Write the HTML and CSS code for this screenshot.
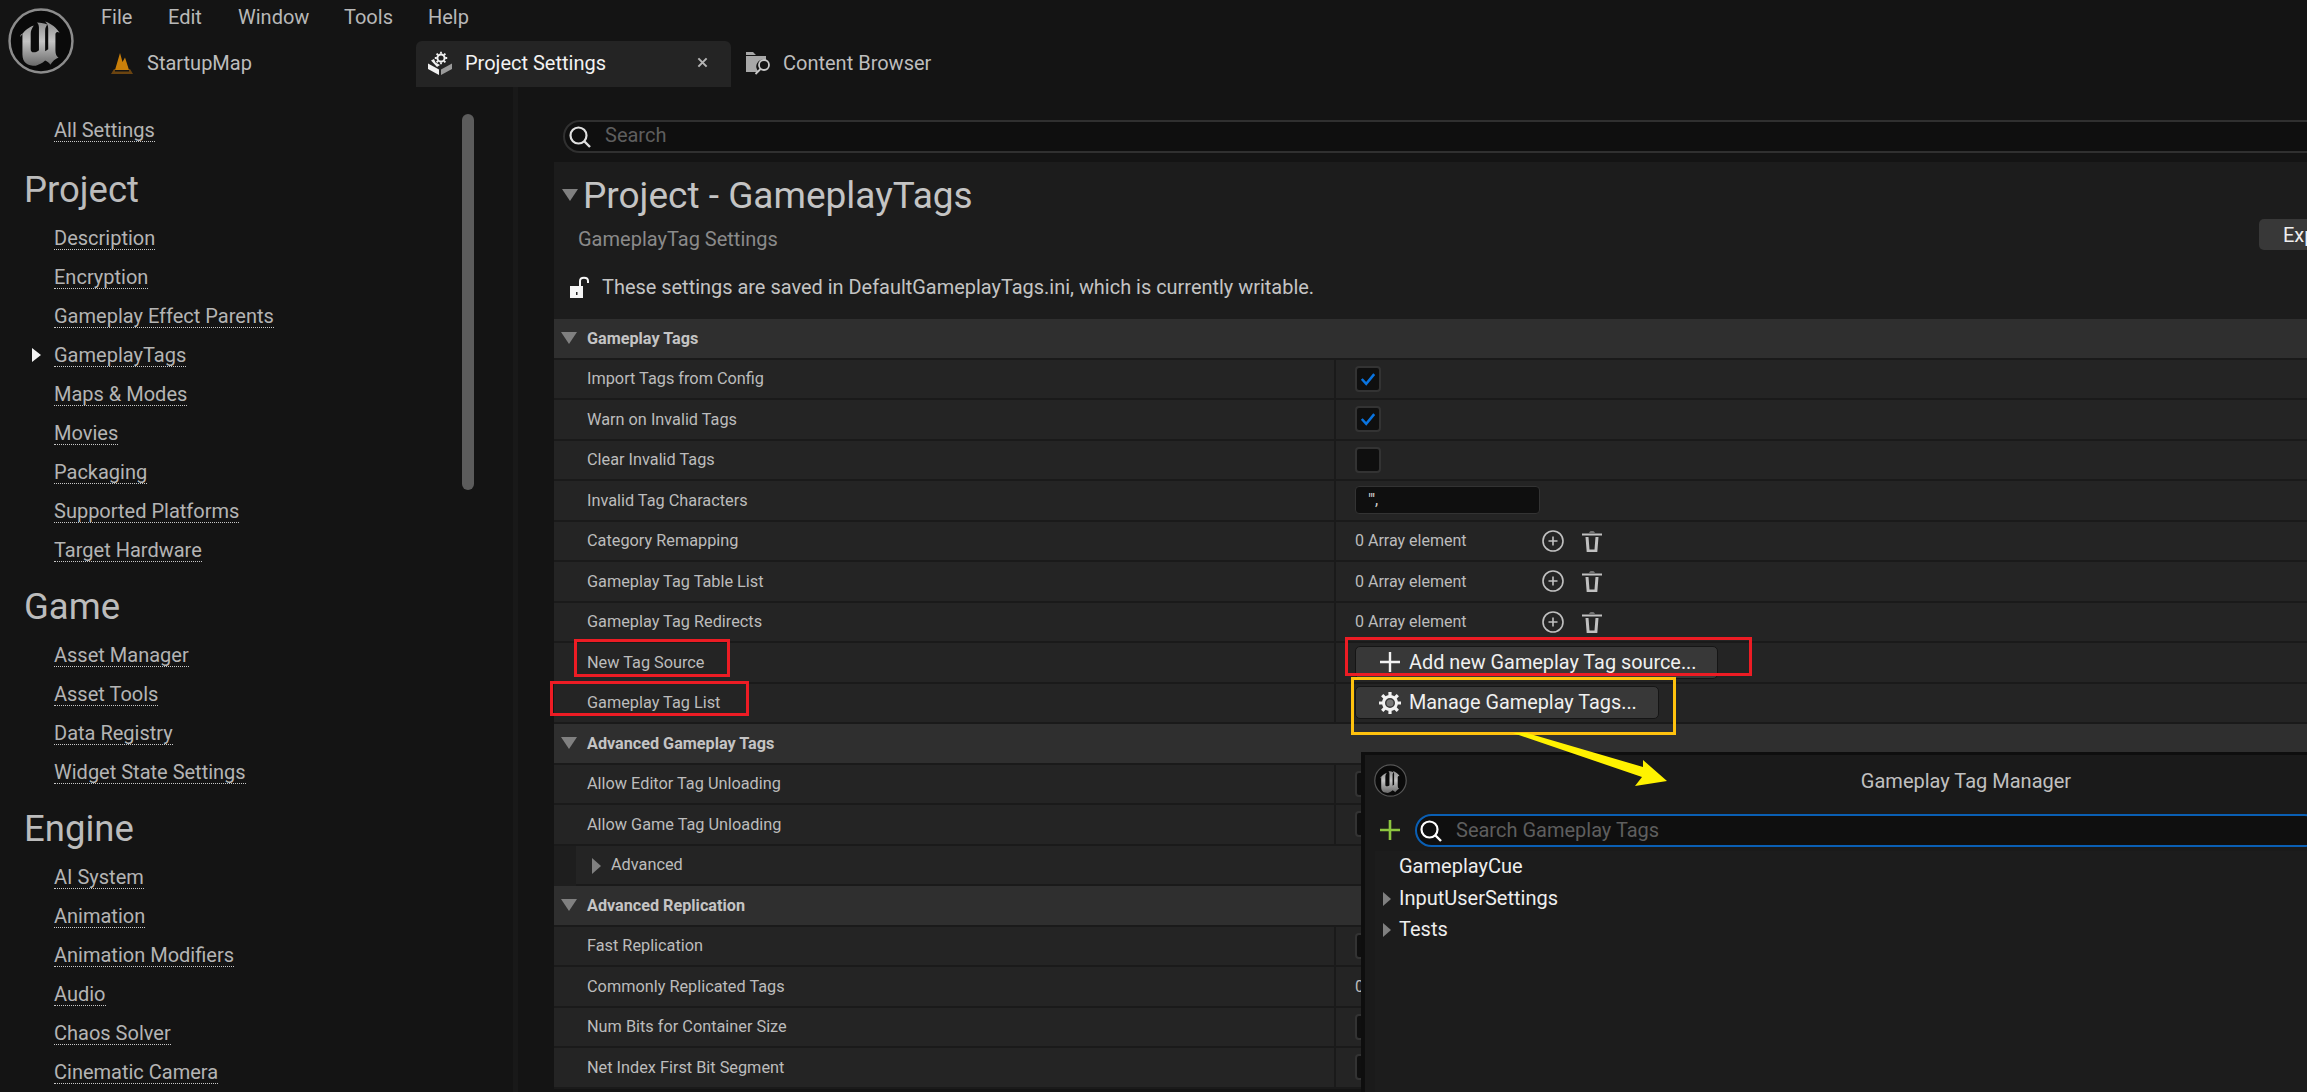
FILE: index.html
```html
<!DOCTYPE html>
<html lang="en">
<head>
  <meta charset="UTF-8" />
  <title>Project Settings</title>
  <link rel="stylesheet" href="styles.css">
</head>
<body>
  <svg class="defs" width="0" height="0">
    <defs>
      <linearGradient id="ueMetal" x1="0" y1="0" x2="0" y2="1">
        <stop offset="0" stop-color="#8c8c8c"/>
        <stop offset=".45" stop-color="#c4c4c4"/>
        <stop offset="1" stop-color="#6a6a6a"/>
      </linearGradient>
      <symbol id="ueLogo" viewBox="0 0 64 64">
        <circle cx="32" cy="32" r="30.5" fill="#0a0a0a" stroke="currentColor" stroke-width="2.4"/>
        <path d="M12 28c3-5 7-9 13-11-2 3-3 5-3 8v15c0 2 1 3 3 3 2 0 4-1 5-2V19c0-3-1-4-2-5 4 0 8 1 10 2-1 2-2 3-2 6v20l3-2V20c0-3-1-5-3-7 6 2 11 6 14 11-2-1-3-1-4 1v16c0 4 1 6 3 7-3 1-6 4-8 7-1-2-3-3-5-4-3 3-6 4-9 5-8 0-13-3-13-11V25c-1 0-2 1-2 3z" fill="url(#ueMetal)"/>
      </symbol>
      <symbol id="searchIcon" viewBox="0 0 24 24">
        <circle cx="10.500" cy="10.500" r="8" fill="none" stroke="currentColor" stroke-width="2.200"/>
        <path d="M16 16l6 6" stroke="currentColor" stroke-width="2.400" fill="none"/>
      </symbol>
      <symbol id="addCircle" viewBox="0 0 24 24">
        <circle cx="12" cy="12" r="10" fill="none" stroke="currentColor" stroke-width="1.600"/>
        <path d="M12 7.500v9M7.500 12h9" stroke="currentColor" stroke-width="1.600" fill="none"/>
      </symbol>
      <symbol id="trash" viewBox="0 0 24 24">
        <path d="M9 3.500c0-1.500 6-1.500 6 0z" fill="currentColor"/>
        <path d="M2 4.500h20v2H2z" fill="currentColor"/>
        <path d="M5.500 8h3l1 12.500h5l1-12.500h3l-1.200 15H6.700z" fill="currentColor"/>
      </symbol>
    </defs>
  </svg>

  <header class="topbar">
    <svg class="logo"><use href="#ueLogo"/></svg>
    <div class="topbar-right">
      <nav class="menu">
        <span class="menu-item">File</span>
        <span class="menu-item">Edit</span>
        <span class="menu-item">Window</span>
        <span class="menu-item">Tools</span>
        <span class="menu-item">Help</span>
      </nav>
      <div class="tabs">
        <div class="tab tab-map">
          <svg class="tab-icon" viewBox="0 0 24 24">
            <path d="M5 19L10 2l2.500 9L15 6.500 19 19z" fill="#c97f0a"/>
            <path d="M1 23l3-5h1v2.500h14V18h1l3 5z" fill="#6b4410"/>
          </svg>
          <span>StartupMap</span>
        </div>
        <div class="tab tab-active">
          <svg class="tab-icon" viewBox="0 0 24 24">
            <path d="M0 12.500l11 6v5.500L0 18z" fill="#f0f0f0"/>
            <path d="M24 12.500l-11 6v5.500l11-6z" fill="#9a9a9a"/>
            <path d="M3 9.500l3-1.500 1.500 3.500 4.500 2.500-3 2z" fill="#f0f0f0"/>
            <circle cx="13" cy="7" r="3.600" fill="none" stroke="#f0f0f0" stroke-width="2"/>
            <path d="M13 .8v2M13 11.200v2M6.800 7h2M17.200 7h2M8.600 2.600l1.400 1.400M16 10l1.400 1.400M8.600 11.400L10 10M16 4l1.400-1.400" stroke="#f0f0f0" stroke-width="1.800"/>
          </svg>
          <span class="tab-label">Project Settings</span>
          <svg class="tab-close" viewBox="0 0 12 12"><path d="M1.500 1.500l9 9M10.500 1.500l-9 9" stroke="#b5b5b5" stroke-width="2.200"/></svg>
        </div>
        <div class="tab tab-browser">
          <svg class="tab-icon" viewBox="0 0 24 24">
            <path d="M0 1h7l3 3h-10zM0 5h20v4a7 7 0 0 0-7 12H0z" fill="#a8a8a8"/>
            <circle cx="18" cy="14" r="5" fill="none" stroke="#c8c8c8" stroke-width="1.800"/>
            <path d="M14.500 18l-5 5" stroke="#c8c8c8" stroke-width="1.800"/>
          </svg>
          <span>Content Browser</span>
        </div>
      </div>
    </div>
  </header>

  <div class="main">
    <aside class="sidebar">
      <div class="scrollbar"></div>
      <a class="side-link side-all">All Settings</a>
      <h2 class="side-head">Project</h2>
      <a class="side-link">Description</a>
      <a class="side-link">Encryption</a>
      <a class="side-link">Gameplay Effect Parents</a>
      <a class="side-link side-current">GameplayTags</a>
      <a class="side-link">Maps &amp; Modes</a>
      <a class="side-link">Movies</a>
      <a class="side-link">Packaging</a>
      <a class="side-link">Supported Platforms</a>
      <a class="side-link">Target Hardware</a>
      <h2 class="side-head">Game</h2>
      <a class="side-link">Asset Manager</a>
      <a class="side-link">Asset Tools</a>
      <a class="side-link">Data Registry</a>
      <a class="side-link">Widget State Settings</a>
      <h2 class="side-head">Engine</h2>
      <a class="side-link">AI System</a>
      <a class="side-link">Animation</a>
      <a class="side-link">Animation Modifiers</a>
      <a class="side-link">Audio</a>
      <a class="side-link">Chaos Solver</a>
      <a class="side-link">Cinematic Camera</a>
    </aside>

    <section class="content">
      <div class="searchbox">
        <svg class="search-icon"><use href="#searchIcon"/></svg>
        <span class="search-text">Search</span>
      </div>

      <div class="panel">
        <div class="panel-title">
          <span class="tri tri-down tri-title"></span>
          <h1>Project - GameplayTags</h1>
        </div>
        <div class="panel-sub">
          <span>GameplayTag Settings</span>
          <button class="export-btn">Export</button>
        </div>
        <div class="panel-note">
          <svg class="lock" viewBox="0 0 22 22">
            <path d="M1 10h13v12H1z" fill="#f5f5f5"/>
            <path d="M7 16h1.500v3H7z" fill="#222"/>
            <path d="M11 10V5c0-4.500 8-4.500 8 0v2" fill="none" stroke="#f5f5f5" stroke-width="2"/>
          </svg>
          <span>These settings are saved in DefaultGameplayTags.ini, which is currently writable.</span>
        </div>

        <div class="section-row"><span class="tri tri-down"></span>Gameplay Tags</div>
        <div class="row"><div class="row-name">Import Tags from Config</div><div class="row-val"><span class="checkbox"><svg viewBox="0 0 18 14"><path d="M2 7l5 5.500L16 1.500" fill="none" stroke="#0a74e0" stroke-width="2.800"/></svg></span></div></div>
        <div class="row"><div class="row-name">Warn on Invalid Tags</div><div class="row-val"><span class="checkbox"><svg viewBox="0 0 18 14"><path d="M2 7l5 5.500L16 1.500" fill="none" stroke="#0a74e0" stroke-width="2.800"/></svg></span></div></div>
        <div class="row"><div class="row-name">Clear Invalid Tags</div><div class="row-val"><span class="checkbox"></span></div></div>
        <div class="row"><div class="row-name">Invalid Tag Characters</div><div class="row-val"><span class="textfield">"',</span></div></div>
        <div class="row"><div class="row-name">Category Remapping</div><div class="row-val"><span class="array-count">0 Array element</span><svg class="arr-icon"><use href="#addCircle"/></svg><svg class="arr-icon arr-trash"><use href="#trash"/></svg></div></div>
        <div class="row"><div class="row-name">Gameplay Tag Table List</div><div class="row-val"><span class="array-count">0 Array element</span><svg class="arr-icon"><use href="#addCircle"/></svg><svg class="arr-icon arr-trash"><use href="#trash"/></svg></div></div>
        <div class="row"><div class="row-name">Gameplay Tag Redirects</div><div class="row-val"><span class="array-count">0 Array element</span><svg class="arr-icon"><use href="#addCircle"/></svg><svg class="arr-icon arr-trash"><use href="#trash"/></svg></div></div>
        <div class="row"><div class="row-name">New Tag Source</div><div class="row-val"><button class="ue-btn ue-btn-add"><svg class="btn-icon" viewBox="0 0 20 20"><path d="M10 0v20M0 10h20" stroke="#f2f2f2" stroke-width="2.400"/></svg>Add new Gameplay Tag source...</button></div></div>
        <div class="row"><div class="row-name">Gameplay Tag List</div><div class="row-val"><button class="ue-btn ue-btn-manage"><svg class="btn-icon btn-gear" viewBox="0 0 24 24"><circle cx="12" cy="12" r="6.500" fill="none" stroke="#f2f2f2" stroke-width="3"/><circle cx="12" cy="12" r="3.500" fill="#777"/><path d="M12 1v4M12 19v4M1 12h4M19 12h4M4.200 4.200l2.800 2.800M17 17l2.800 2.800M4.200 19.800L7 17M17 7l2.800-2.800" stroke="#f2f2f2" stroke-width="3.200"/></svg>Manage Gameplay Tags...</button></div></div>

        <div class="section-row"><span class="tri tri-down"></span>Advanced Gameplay Tags</div>
        <div class="row"><div class="row-name">Allow Editor Tag Unloading</div><div class="row-val"><span class="checkbox"></span></div></div>
        <div class="row"><div class="row-name">Allow Game Tag Unloading</div><div class="row-val"><span class="checkbox"></span></div></div>
        <div class="row row-advanced"><span class="tri tri-right"></span>Advanced</div>

        <div class="section-row"><span class="tri tri-down"></span>Advanced Replication</div>
        <div class="row"><div class="row-name">Fast Replication</div><div class="row-val"><span class="checkbox"></span></div></div>
        <div class="row"><div class="row-name">Commonly Replicated Tags</div><div class="row-val"><span class="array-count">0 Array element</span></div></div>
        <div class="row"><div class="row-name">Num Bits for Container Size</div><div class="row-val"><span class="checkbox"></span></div></div>
        <div class="row"><div class="row-name">Net Index First Bit Segment</div><div class="row-val"><span class="checkbox"></span></div></div>
      </div>
    </section>
  </div>

  <!-- tag manager window, pasted over the settings -->
  <div class="tag-window">
    <div class="tag-title">
      <svg class="tag-logo"><use href="#ueLogo"/></svg>
      <span class="tag-title-text">Gameplay Tag Manager</span>
    </div>
    <div class="tag-body">
      <div class="tag-search-row">
        <svg class="tag-add" viewBox="0 0 20 20"><path d="M10 0v20M0 10h20" stroke="#8cc63f" stroke-width="2.600"/></svg>
        <div class="tag-search">
          <svg class="search-icon tag-search-icon"><use href="#searchIcon"/></svg>
          <span class="tag-search-text">Search Gameplay Tags</span>
        </div>
      </div>
      <div class="tag-item">GameplayCue</div>
      <div class="tag-item"><span class="tri tri-right tri-tree"></span>InputUserSettings</div>
      <div class="tag-item"><span class="tri tri-right tri-tree"></span>Tests</div>
    </div>
  </div>

  <!-- annotations drawn on the screenshot -->
  <div class="mark mark-red mark-source"></div>
  <div class="mark mark-red mark-list"></div>
  <div class="mark mark-red mark-add"></div>
  <div class="mark mark-yellow mark-manage"></div>
  <svg class="arrow" viewBox="0 0 170 60">
    <polygon points="3,3 17,3 133,37 133,30 157,51 125,56 132,47" fill="#fff200"/>
  </svg>
</body>
</html>
```

FILE: styles.css
```css
* {
  box-sizing: border-box;
}

html, body {
  margin: 0;
  height: 100%;
}

body {
  position: relative;
  width: 2307px;
  height: 1092px;
  overflow: hidden;
  background: #141414;
  font-family: Roboto, "Liberation Sans", sans-serif;
  color: #c0c0c0;
}

.defs {
  position: absolute;
}

/* top bar */
.topbar {
  display: flex;
  height: 87px;
}

.logo {
  width: 66px;
  height: 66px;
  margin: 8px 0 0 8px;
  color: #8c8c8c;
}

.topbar-right {
  display: flex;
  flex-direction: column;
  margin-left: 27px;
}

.menu {
  display: flex;
  height: 41px;
  padding: 4px 0 0 0;
  font-size: 20px;
  line-height: 26px;
  color: #b8b8b8;
}

.menu-item:nth-child(1) { width: 67px; }
.menu-item:nth-child(2) { width: 70px; }
.menu-item:nth-child(3) { width: 106px; }
.menu-item:nth-child(4) { width: 84px; }

.tabs {
  display: flex;
  height: 46px;
  font-size: 20px;
}

.tab {
  display: flex;
  align-items: center;
  padding-bottom: 3px;
}

.tab-map {
  width: 315px;
  padding-left: 9px;
  color: #bdbdbd;
}

.tab-active {
  width: 315px;
  padding-left: 12px;
  background: #242424;
  border-radius: 6px 6px 0 0;
  color: #f2f2f2;
}

.tab-browser {
  padding-left: 15px;
  color: #bdbdbd;
}

.tab-icon {
  width: 24px;
  height: 24px;
  margin-right: 13px;
  flex: none;
}

.tab-label {
  width: 232px;
}

.tab-close {
  width: 11px;
  height: 11px;
}

/* left list */
.main {
  display: flex;
  height: 1005px;
}

.sidebar {
  position: relative;
  width: 518px;
  flex: none;
  padding: 32px 0 0 54px;
  border-right: 5px solid #191919;
}

.scrollbar {
  position: absolute;
  left: 462px;
  top: 27px;
  width: 12px;
  height: 376px;
  border-radius: 6px;
  background: #5c5c5c;
}

.side-link {
  display: table;
  height: 23px;
  margin-bottom: 16px;
  font-size: 20px;
  line-height: 22px;
  color: #b4b4b4;
  border-bottom: 1px dotted #c8c8c8;
}

.side-all {
  margin-bottom: 27px;
}

.side-current {
  position: relative;
}

.side-current::before {
  content: "";
  position: absolute;
  left: -22px;
  top: 4px;
  border-left: 9px solid #f4f4f4;
  border-top: 7px solid transparent;
  border-bottom: 7px solid transparent;
}

.side-head {
  margin: 24px 0 16px -30px;
  font-size: 36.500px;
  line-height: 42px;
  font-weight: 400;
  color: #bcbcbc;
}

/* settings */
.content {
  flex: 1;
  min-width: 0;
  padding: 33px 0 0 36px;
}

.searchbox {
  display: flex;
  align-items: center;
  height: 33px;
  margin: 0 -40px 9px 9px;
  padding-left: 3px;
  background: #0f0f0f;
  border: 2px solid #303030;
  border-radius: 17px;
}

.search-icon {
  width: 24px;
  height: 24px;
  color: #e0e0e0;
}

.search-text {
  margin-left: 13px;
  margin-bottom: 4px;
  font-size: 20px;
  color: #5e5e5e;
}

.panel {
  margin-right: -40px;
  background: #1c1c1c;
}

.panel-title {
  display: flex;
  align-items: center;
  height: 66px;
  padding-left: 8px;
}

.panel-title h1 {
  margin: 0;
  font-size: 37px;
  font-weight: 400;
  color: #c4c4c4;
}

.panel-sub {
  position: relative;
  height: 27px;
  padding-left: 24px;
  font-size: 20px;
  line-height: 22px;
  color: #8a8a8a;
}

.export-btn {
  position: absolute;
  left: 1705px;
  top: -9px;
  width: 120px;
  height: 31px;
  padding: 0 0 0 24px;
  text-align: left;
  font: inherit;
  color: #eee;
  background: #383838;
  border: 0;
  border-radius: 5px;
}

.panel-note {
  display: flex;
  align-items: center;
  height: 64px;
  padding-left: 15px;
  font-size: 19.950px;
  color: #c4c4c4;
}

.lock {
  width: 22px;
  height: 22px;
  margin-right: 11px;
}

.section-row {
  display: flex;
  align-items: center;
  height: 40.500px;
  padding-left: 33px;
  background: #2f2f2f;
  border-bottom: 2px solid #1a1a1a;
  font-size: 16.200px;
  font-weight: 700;
  color: #c4c4c4;
  position: relative;
}

.tri {
  position: absolute;
  display: block;
}

.tri-down {
  border-top: 12px solid #808080;
  border-left: 8px solid transparent;
  border-right: 8px solid transparent;
  left: 7px;
  top: 13px;
}

.tri-right {
  border-left: 9px solid #808080;
  border-top: 8px solid transparent;
  border-bottom: 8px solid transparent;
}

.tri-title {
  position: static;
  margin: 0 5px 0 0;
}

.row {
  display: flex;
  height: 40.500px;
  background: #242424;
  border-bottom: 2px solid #1a1a1a;
  font-size: 16.300px;
}

.row-name {
  display: flex;
  align-items: center;
  width: 782px;
  padding-left: 33px;
  border-right: 2px solid #1a1a1a;
  color: #bcbcbc;
}

.row-val {
  display: flex;
  align-items: center;
  padding-left: 19px;
  font-size: 16px;
}

.row-advanced {
  position: relative;
  align-items: center;
  margin-left: 22px;
  padding-left: 35px;
  color: #bcbcbc;
  box-shadow: -22px 0 0 #1e1e1e;
}

.row-advanced .tri {
  left: 16px;
  top: 12px;
}

.checkbox {
  display: block;
  width: 26px;
  height: 26px;
  padding: 4px 3px;
  background: #0f0f0f;
  border: 2px solid #333;
  border-radius: 4px;
}

.checkbox svg {
  display: block;
  width: 16px;
  height: 14px;
}

.textfield {
  display: block;
  width: 185px;
  height: 28px;
  padding-left: 12px;
  background: #0f0f0f;
  border: 1px solid #333;
  border-radius: 4px;
  line-height: 26px;
  color: #d0d0d0;
}

.array-count {
  width: 186px;
  color: #bcbcbc;
}

.arr-icon {
  width: 24px;
  height: 24px;
  color: #c0c0c0;
}

.arr-trash {
  margin-left: 15px;
}

.ue-btn {
  display: flex;
  align-items: center;
  height: 33px;
  padding: 0 0 0 24px;
  font-family: inherit;
  font-size: 19.850px;
  color: #f0f0f0;
  background: #383838;
  border: 1px solid #151515;
  border-radius: 5px;
}

.ue-btn-add { width: 363px; }
.ue-btn-manage { width: 304px; }

.btn-icon {
  width: 20px;
  height: 20px;
  margin-right: 9px;
}

.btn-gear {
  width: 24px;
  height: 24px;
  margin: 0 7px 0 -2px;
}

/* tag manager window */
.tag-window {
  position: absolute;
  left: 1361px;
  top: 752px;
  width: 960px;
  height: 340px;
  background: #1a1a1a;
  border: solid #0e0e0e;
  border-width: 3px 0 0 4px;
}

.tag-title {
  position: relative;
  display: flex;
  align-items: center;
  justify-content: center;
  height: 52px;
  padding-left: 246px;
  font-size: 20px;
  color: #c0c0c0;
}

.tag-logo {
  position: absolute;
  left: 9px;
  top: 9px;
  width: 33px;
  height: 33px;
  color: #555;
}

.tag-body {
  margin-left: 10px;
  height: 290px;
  background: #1c1c1c;
}

.tag-search-row {
  display: flex;
  align-items: flex-start;
  height: 44px;
  margin-left: -10px;
  padding-top: 7px;
  background: #1a1a1a;
}

.tag-add {
  width: 20px;
  height: 22px;
  margin: 5px 0 0 15px;
}

.tag-search {
  flex: 1;
  display: flex;
  align-items: center;
  height: 33px;
  margin-left: 15px;
  padding-left: 2px;
  background: #0f0f0f;
  border: 2px solid #0a5fb4;
  border-radius: 17px;
}

.tag-search-icon {
  color: #fff;
}

.tag-search-text {
  margin-left: 13px;
  margin-bottom: 2px;
  font-size: 20px;
  color: #5e5e5e;
}

.tag-item {
  position: relative;
  height: 31.500px;
  padding-left: 24px;
  font-size: 20px;
  line-height: 31.500px;
  color: #eee;
}

.tri-tree {
  left: 8px;
  top: 9px;
  border-left-width: 8px;
  border-top-width: 7px;
  border-bottom-width: 7px;
}

/* annotations */
.mark {
  position: absolute;
  border: 3px solid #ed1c24;
}

.mark-yellow {
  border-color: #ffc20e;
}

.mark-source { left: 574px; top: 639px; width: 156px; height: 38px; }
.mark-list { left: 550px; top: 681px; width: 199px; height: 35px; }
.mark-add { left: 1345px; top: 637px; width: 407px; height: 39px; }
.mark-manage { left: 1351px; top: 677px; width: 325px; height: 58px; }

.arrow {
  position: absolute;
  left: 1510px;
  top: 730px;
  width: 170px;
  height: 60px;
}
```
